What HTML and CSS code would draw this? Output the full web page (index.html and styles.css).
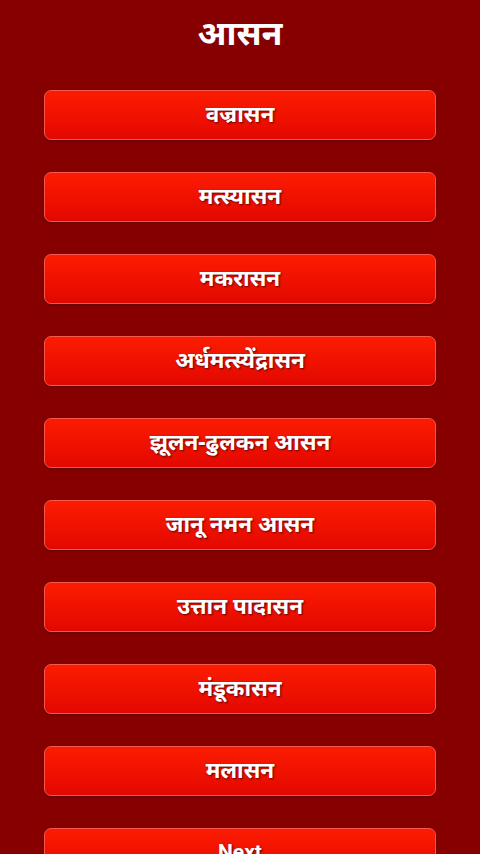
FILE: index.html
```html
<!DOCTYPE html>
<html lang="hi">
<head>
<meta charset="utf-8">
<title>आसन</title>
<link rel="stylesheet" href="styles.css">
</head>
<body>
<div class="screen">
  <h1 class="title">आसन</h1>
  <div class="list">
    <button class="item">वज्रासन</button>
    <button class="item">मत्स्यासन</button>
    <button class="item">मकरासन</button>
    <button class="item">अर्धमत्स्येंद्रासन</button>
    <button class="item">झूलन-ढुलकन आसन</button>
    <button class="item">जानू नमन आसन</button>
    <button class="item">उत्तान पादासन</button>
    <button class="item">मंडूकासन</button>
    <button class="item">मलासन</button>
    <button class="item next">Next</button>
  </div>
</div>
</body>
</html>
```
FILE: styles.css
```css
html, body {
  margin: 0;
  padding: 0;
  background: #860000;
  height: 100%;
  overflow: hidden;
}
.screen {
  font-family: "Noto Sans", "Noto Sans Devanagari", "Lohit Devanagari", "DejaVu Sans", sans-serif;
  color: #fff;
}
.title {
  margin: 0;
  height: 64px;
  line-height: 64px;
  text-align: center;
  font-size: 34px;
  font-weight: bold;
}
.list {
  display: flex;
  flex-direction: column;
  gap: 32px;
  padding: 26px 44px 0;
}
.item {
  height: 50px;
  width: 100%;
  border: 1.5px solid #f4584c;
  border-radius: 7px;
  background: linear-gradient(to bottom, #fb1c00 0%, #ee1000 60%, #e20800 100%);
  color: #fff;
  font-family: inherit;
  font-size: 22.5px;
  font-weight: bold;
  text-shadow: 1px 1px 2px rgba(60,0,0,0.8);
  box-shadow: 0 1px 2px rgba(40,0,0,0.4);
  padding: 0 0 3px;
  margin: 0;
}
.next {
  font-family: "Roboto", "Noto Sans", sans-serif;
  font-size: 21px;
}
```
